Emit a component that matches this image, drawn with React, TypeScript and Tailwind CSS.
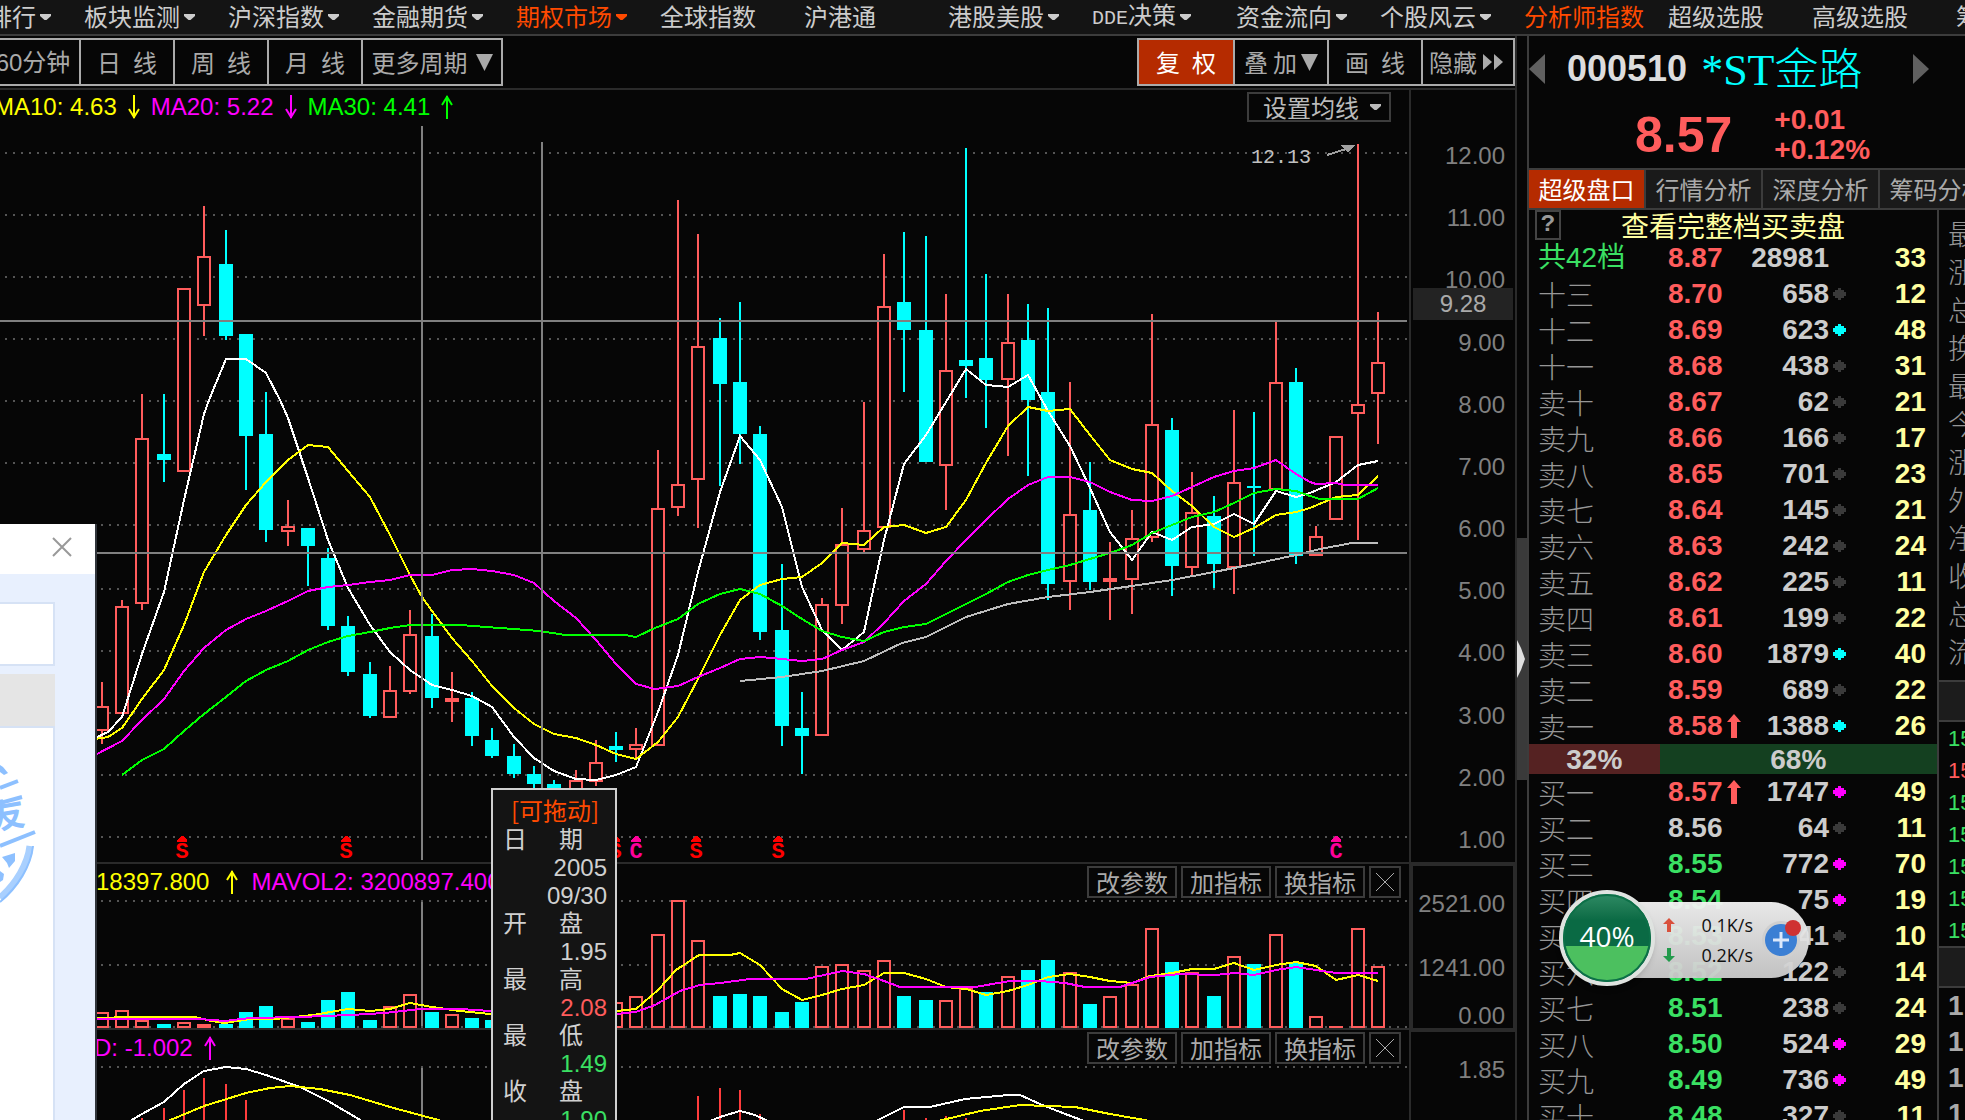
import { useState } from "react"
import type { ReactNode } from "react"

const RED = "#ff5c5c"
const CYAN = "#00ffff"

type Candle = {
  x: number
  high: number
  top: number
  bottom: number
  low: number
  up: boolean
  volume: number
  volumeUp?: boolean
}

function c(
  x: number,
  high: number,
  top: number,
  bottom: number,
  low: number,
  up: number,
  volume: number,
  volumeUp?: boolean
): Candle {
  return { x, high, top, bottom, low, up: up === 1, volume, volumeUp }
}

const candles: Candle[] = [
  c(102, 682, 706, 731, 744, 1, 1012),
  c(122, 600, 606, 714, 714, 1, 1010),
  c(142, 394, 438, 604, 610, 1, 1020),
  c(164, 394, 454, 460, 482, 0, 1024),
  c(184, 288, 288, 472, 472, 1, 1022),
  c(204, 206, 256, 306, 336, 1, 1024),
  c(226, 230, 264, 336, 340, 0, 1024),
  c(246, 334, 334, 436, 490, 0, 1012),
  c(266, 392, 434, 530, 542, 0, 1006),
  c(288, 500, 526, 532, 546, 1, 1018),
  c(308, 528, 528, 546, 586, 0, 1022),
  c(328, 548, 558, 626, 630, 0, 1000),
  c(348, 616, 626, 672, 676, 0, 992),
  c(370, 662, 674, 716, 718, 0, 1020),
  c(390, 666, 690, 718, 718, 1, 1006),
  c(410, 610, 634, 692, 694, 1, 994),
  c(432, 614, 636, 698, 708, 0, 1012),
  c(452, 672, 698, 702, 722, 1, 1014),
  c(472, 692, 698, 736, 746, 0, 1018),
  c(492, 728, 740, 756, 758, 0, 1020),
  c(514, 744, 756, 774, 778, 0, 1020),
  c(534, 766, 774, 784, 790, 0, 1020),
  c(554, 780, 784, 792, 796, 0, 1018),
  c(576, 770, 780, 796, 800, 1, 1016),
  c(596, 740, 762, 782, 786, 1, 1010),
  c(616, 732, 746, 750, 762, 0, 1002, true),
  c(636, 728, 744, 750, 758, 1, 996),
  c(658, 450, 508, 746, 746, 1, 934),
  c(678, 200, 484, 508, 516, 1, 900),
  c(698, 234, 346, 480, 528, 1, 940),
  c(720, 318, 338, 384, 486, 0, 996),
  c(740, 302, 382, 434, 464, 0, 994),
  c(760, 426, 434, 632, 640, 0, 996),
  c(782, 564, 630, 726, 746, 0, 1012),
  c(802, 692, 728, 736, 774, 0, 1002),
  c(822, 598, 604, 736, 736, 1, 966),
  c(842, 508, 544, 606, 624, 1, 964),
  c(864, 402, 530, 550, 554, 1, 970),
  c(884, 254, 306, 528, 528, 1, 960),
  c(904, 232, 302, 330, 392, 0, 996),
  c(926, 236, 330, 462, 462, 0, 1000),
  c(946, 294, 370, 466, 510, 1, 1000),
  c(966, 148, 360, 366, 398, 0, 988, true),
  c(986, 274, 358, 380, 428, 0, 992),
  c(1008, 294, 342, 380, 456, 1, 976),
  c(1028, 304, 340, 400, 476, 0, 970),
  c(1048, 308, 392, 584, 600, 0, 960),
  c(1070, 382, 514, 582, 610, 1, 972),
  c(1090, 462, 510, 582, 590, 0, 1004),
  c(1110, 542, 578, 582, 620, 1, 996),
  c(1132, 510, 538, 580, 614, 1, 984),
  c(1152, 314, 424, 538, 542, 1, 928),
  c(1172, 418, 430, 566, 596, 0, 962),
  c(1192, 472, 512, 568, 576, 1, 972),
  c(1214, 496, 516, 564, 588, 0, 996),
  c(1234, 410, 482, 568, 594, 1, 956),
  c(1254, 412, 486, 488, 556, 0, 964),
  c(1276, 320, 382, 490, 490, 1, 934),
  c(1296, 368, 382, 556, 564, 0, 962),
  c(1316, 526, 536, 556, 556, 1, 1016),
  c(1336, 436, 436, 520, 520, 1, 1026),
  c(1358, 144, 404, 414, 540, 1, 928),
  c(1378, 312, 362, 394, 444, 1, 966),
]

const priceLines = [
  {
    color: "#bdbdbd",
    points:
      "740,681 782,677 822,671 864,661 902,643 926,637 966,617 1008,604 1048,597 1090,592 1132,586 1172,580 1214,572 1254,564 1296,555 1320,549 1352,543 1378,543",
  },
  {
    color: "#ffffff",
    points:
      "95,738 108,732 122,717 142,654 164,592 184,500 204,414 209,400 226,359 246,359 266,373 280,400 288,418 308,478 328,540 348,588 370,625 390,652 410,670 432,685 452,690 472,696 492,707 514,737 534,758 554,771 576,779 596,780 616,775 636,767 658,712 678,655 698,572 720,492 740,436 760,460 782,507 802,587 822,630 842,650 864,632 884,540 904,464 926,435 946,402 966,369 986,385 1008,387 1028,375 1048,411 1070,446 1090,488 1110,532 1132,560 1152,532 1172,540 1192,527 1214,524 1234,514 1254,524 1276,491 1296,497 1310,493 1336,482 1358,465 1378,461",
  },
  {
    color: "#ffff00",
    points:
      "95,739 108,737 122,728 142,699 164,670 184,625 204,572 226,535 246,505 266,482 288,460 308,445 328,447 348,471 370,497 390,535 410,575 422,597 432,611 452,638 472,661 492,686 514,708 534,724 554,734 576,738 596,745 616,754 636,759 658,742 678,717 698,679 720,635 740,600 760,585 782,579 802,577 822,563 842,543 864,545 884,527 904,525 926,533 946,527 966,500 986,463 1008,426 1028,407 1048,411 1070,409 1090,435 1110,460 1132,469 1152,473 1172,491 1192,506 1214,527 1234,537 1254,528 1276,515 1296,512 1310,508 1336,497 1358,495 1378,476",
  },
  {
    color: "#ff00ff",
    points:
      "95,755 122,741 142,720 164,699 184,671 204,648 226,630 246,619 266,611 288,601 308,591 328,587 348,585 370,582 390,580 410,575 432,575 452,570 472,569 492,571 514,575 534,583 554,601 576,618 596,640 616,664 636,684 655,689 678,686 698,677 720,668 740,659 760,657 782,659 802,661 822,659 842,650 864,642 884,623 904,601 926,584 946,561 966,540 986,520 1008,499 1028,485 1048,477 1070,477 1090,482 1110,492 1132,500 1152,501 1172,496 1192,487 1214,477 1234,471 1254,468 1276,460 1296,474 1310,482 1316,484 1336,483 1345,485 1378,485",
  },
  {
    color: "#00ff00",
    points:
      "122,775 142,760 164,749 184,731 204,714 226,697 246,681 266,670 288,661 308,650 328,642 348,636 370,632 390,628 410,625 460,625 500,628 540,631 565,635 625,635 636,637 655,628 678,619 698,604 720,594 740,589 760,594 782,606 802,619 822,631 842,637 864,641 884,632 904,627 926,624 946,614 966,604 986,594 1008,582 1028,575 1048,570 1070,565 1090,559 1110,553 1132,545 1152,533 1172,525 1192,517 1214,512 1234,503 1254,493 1276,489 1296,491 1310,496 1320,499 1358,499 1378,488",
  },
]

const volumeLines = [
  {
    color: "#ffff00",
    points:
      "95,1018 133,1017 195,1017 211,1021 225,1023 250,1019 275,1019 313,1015 348,1009 370,1011 390,1009 410,1003 432,1007 460,1011 490,1014 616,1011 636,1009 658,990 676,970 699,955 730,955 740,953 760,965 782,989 802,1000 822,995 842,989 864,985 884,973 904,973 926,979 946,987 966,989 986,995 1008,991 1028,985 1048,977 1070,974 1090,977 1110,981 1132,983 1150,976 1172,973 1192,969 1214,969 1234,963 1254,970 1276,965 1296,962 1316,966 1336,980 1358,975 1378,981",
  },
  {
    color: "#ff00ff",
    points:
      "95,1019 200,1019 225,1021 250,1018 300,1017 350,1015 385,1013 420,1009 460,1009 490,1011 616,1014 636,1012 655,1005 680,991 700,985 720,983 750,979 806,979 842,971 864,974 884,981 900,987 975,987 1010,981 1040,981 1065,983 1085,987 1120,987 1150,977 1180,974 1215,975 1235,973 1254,975 1276,970 1296,967 1316,970 1336,973 1378,973",
  },
]

const macdLines = [
  { color: "#ffffff", points: "130,1121 142,1114 164,1102 184,1084 204,1071 226,1067 246,1069 266,1075 300,1087 328,1101 362,1121" },
  { color: "#ffff00", points: "168,1121 204,1106 246,1093 270,1088 290,1086 320,1089 350,1095 390,1107 442,1121" },
  { color: "#ffffff", points: "710,1121 720,1117 740,1111 755,1115 768,1121" },
  { color: "#ffffff", points: "876,1121 904,1107 930,1107 965,1099 1008,1095 1020,1095 1040,1104 1060,1112 1084,1121" },
  { color: "#ffff00", points: "938,1121 980,1111 1020,1105 1075,1107 1110,1114 1150,1121" },
]

const macdBars = [
  [142, 1118],
  [164, 1108],
  [184, 1090],
  [204, 1078],
  [226, 1084],
  [246, 1100],
  [698, 1096],
  [720, 1088],
  [740, 1090],
  [760, 1114],
  [904, 1110],
  [926, 1118],
  [946, 1116],
  [966, 1118],
]

const markers = [
  { x: 182, letter: "S", color: "#ff0000" },
  { x: 346, letter: "S", color: "#ff0000" },
  { x: 615, letter: "S", color: "#ff0000" },
  { x: 636, letter: "C", color: "#ff0099" },
  { x: 696, letter: "S", color: "#ff0000" },
  { x: 778, letter: "S", color: "#ff0000" },
  { x: 1336, letter: "C", color: "#ff0099" },
]

const navItems: { label: ReactNode; arrow?: boolean; hot?: boolean }[] = [
  { label: "综合排行", arrow: true },
  { label: "板块监测", arrow: true },
  { label: "沪深指数", arrow: true },
  { label: "金融期货", arrow: true },
  { label: "期权市场", arrow: true, hot: true },
  { label: "全球指数" },
  { label: "沪港通" },
  { label: "港股美股", arrow: true },
  { label: <><span className="font-['Liberation_Mono',monospace] text-[20px]">DDE</span>决策</>, arrow: true },
  { label: "资金流向", arrow: true },
  { label: "个股风云", arrow: true },
  { label: "分析师指数", hot: true },
  { label: "超级选股" },
  { label: "高级选股" },
  { label: "筹码选股" },
]

type Level = {
  name: string
  price: string
  volume: string
  count: string
  dot?: string
  tone?: string
  arrow?: boolean
}

const asks: Level[] = [
  { name: "十三", price: "8.70", volume: "658", count: "12" },
  { name: "十二", price: "8.69", volume: "623", count: "48", dot: CYAN },
  { name: "十一", price: "8.68", volume: "438", count: "31" },
  { name: "卖十", price: "8.67", volume: "62", count: "21" },
  { name: "卖九", price: "8.66", volume: "166", count: "17" },
  { name: "卖八", price: "8.65", volume: "701", count: "23" },
  { name: "卖七", price: "8.64", volume: "145", count: "21" },
  { name: "卖六", price: "8.63", volume: "242", count: "24" },
  { name: "卖五", price: "8.62", volume: "225", count: "11" },
  { name: "卖四", price: "8.61", volume: "199", count: "22" },
  { name: "卖三", price: "8.60", volume: "1879", count: "40", dot: CYAN },
  { name: "卖二", price: "8.59", volume: "689", count: "22" },
  { name: "卖一", price: "8.58", volume: "1388", count: "26", dot: CYAN, arrow: true },
]

const GREEN_TEXT = "text-[#3ae063]"
const RED_TEXT = "text-[#ff5c5c]"
const GREY_TEXT = "text-[#cccccc]"

const bids: Level[] = [
  { name: "买一", price: "8.57", volume: "1747", count: "49", dot: "#ff00ff", arrow: true },
  { name: "买二", price: "8.56", volume: "64", count: "11", tone: GREY_TEXT },
  { name: "买三", price: "8.55", volume: "772", count: "70", dot: "#ff00ff", tone: GREEN_TEXT },
  { name: "买四", price: "8.54", volume: "75", count: "19", dot: "#ff00ff", tone: GREEN_TEXT },
  { name: "买五", price: "8.53", volume: "41", count: "10", tone: GREEN_TEXT },
  { name: "买六", price: "8.52", volume: "122", count: "14", tone: GREEN_TEXT },
  { name: "买七", price: "8.51", volume: "238", count: "24", tone: GREEN_TEXT },
  { name: "买八", price: "8.50", volume: "524", count: "29", dot: "#ff00ff", tone: GREEN_TEXT },
  { name: "买九", price: "8.49", volume: "736", count: "49", dot: "#ff00ff", tone: GREEN_TEXT },
  { name: "买十", price: "8.48", volume: "327", count: "11", tone: GREEN_TEXT },
]

const tipRows = [
  { label: "日期", values: ["2005", "09/30"], tone: "text-[#d0d0d0]" },
  { label: "开盘", values: ["1.95"], tone: "text-[#d0d0d0]" },
  { label: "最高", values: ["2.08"], tone: RED_TEXT },
  { label: "最低", values: ["1.49"], tone: GREEN_TEXT },
  { label: "收盘", values: ["1.90"], tone: GREEN_TEXT },
]

const priceTicks = ["12.00", "11.00", "10.00", "9.00", "8.00", "7.00", "6.00", "5.00", "4.00", "3.00", "2.00", "1.00"]
const gridY = [153, 215, 277, 339, 401, 463, 525, 589, 651, 713, 775, 837]

function Caret() {
  return (
    <svg width="11" height="6" viewBox="0 0 11 6" fill="currentColor" className="shrink-0">
      <path d="M0 0H11V2L6.5 6H4.5L0 2Z" />
    </svg>
  )
}

function TrendArrow({ down }: { down?: boolean }) {
  return (
    <svg
      width="14"
      height="24"
      viewBox="0 0 14 24"
      fill="none"
      stroke="currentColor"
      strokeWidth="2"
      className={down ? "rotate-180" : ""}
    >
      <path d="M7 24V1M2 10L7 2L12 10" />
    </svg>
  )
}

function GridLines({ ys }: { ys: number[] }) {
  return (
    <g stroke="#555555" strokeWidth="2" strokeDasharray="2 6">
      {ys.map((y) => (
        <line key={y} x1="5" x2="1409" y1={y} y2={y} />
      ))}
    </g>
  )
}

function Lines({ lines }: { lines: { color: string; points: string }[] }) {
  return (
    <g fill="none" strokeWidth="2">
      {lines.map((line) => (
        <polyline key={line.points} points={line.points} stroke={line.color} />
      ))}
    </g>
  )
}

function Bar({ x, top, bottom, up }: { x: number; top: number; bottom: number; up: boolean }) {
  if (up && bottom - top > 4) {
    return (
      <rect
        x={x - 6}
        y={top + 1}
        width={12}
        height={bottom - top - 2}
        fill="#060606"
        stroke={RED}
        strokeWidth="2"
      />
    )
  }

  return (
    <rect x={x - 7} y={top} width={14} height={bottom - top} fill={up ? RED : CYAN} />
  )
}

function PriceChart() {
  return (
    <svg
      viewBox="0 124 1409 738"
      preserveAspectRatio="none"
      shapeRendering="crispEdges"
      className="block h-[738px] w-full"
    >
      <GridLines ys={gridY} />

      {candles.map((item) => (
        <g key={item.x}>
          <line
            x1={item.x}
            x2={item.x}
            y1={item.high}
            y2={item.low}
            stroke={item.up ? RED : CYAN}
            strokeWidth="2"
          />
          <Bar x={item.x} top={item.top} bottom={item.bottom} up={item.up} />
        </g>
      ))}

      <Lines lines={priceLines} />

      <g stroke="#808080" strokeWidth="2">
        <line x1="0" x2="1407" y1="321" y2="321" />
        <line x1="0" x2="1407" y1="553" y2="553" />
        <line x1="422" x2="422" y1="126" y2="860" />
        <line x1="542" x2="542" y1="142" y2="860" />
      </g>

      {markers.map((marker) => (
        <g key={marker.x} fill={marker.color}>
          <path d={`M${marker.x - 5} 842h10v-2l-4 -4h-2l-4 4z`} />
          <text
            x={marker.x}
            y="858"
            textAnchor="middle"
            className="font-['Liberation_Mono',monospace] text-[22px] font-bold"
          >
            {marker.letter}
          </text>
        </g>
      ))}

      <text x="1251" y="163" fill="#c0c0c0" className="font-['Liberation_Mono',monospace] text-[20px]">
        12.13
      </text>
      <path d="M1327 155L1346 149" stroke="#a0a0a0" strokeWidth="2" />
      <path d="M1340 145H1355L1348 152Z" fill="#a0a0a0" />
    </svg>
  )
}

function VolumeChart() {
  return (
    <svg
      viewBox="0 900 1409 128"
      preserveAspectRatio="none"
      shapeRendering="crispEdges"
      className="block h-[128px] w-full"
    >
      <GridLines ys={[901, 965, 1027]} />
      {candles.map((item) => (
        <Bar
          key={item.x}
          x={item.x}
          top={item.volume}
          bottom={1028}
          up={item.volumeUp ?? item.up}
        />
      ))}
      <line x1="422" x2="422" y1="902" y2="1026" stroke="#808080" strokeWidth="2" />
      <Lines lines={volumeLines} />
    </svg>
  )
}

function MacdChart() {
  return (
    <svg
      viewBox="0 1066 1409 54"
      preserveAspectRatio="none"
      shapeRendering="crispEdges"
      className="block h-[54px] w-full"
    >
      <GridLines ys={[1067]} />
      {macdBars.map(([x, y]) => (
        <line key={x} x1={x} x2={x} y1={y} y2="1120" stroke="#ff3c3c" strokeWidth="2" />
      ))}
      <line x1="422" x2="422" y1="1068" y2="1120" stroke="#808080" strokeWidth="2" />
      <Lines lines={macdLines} />
    </svg>
  )
}

function PanelButtons() {
  return (
    <div className="ml-auto flex gap-1 pr-2">
      {["改参数", "加指标", "换指标"].map((label) => (
        <button
          key={label}
          className="h-8 w-[90px] border-2 border-[#3c3c3c] text-center text-[24px] leading-[26px] text-[#aaaaaa]"
        >
          {label}
        </button>
      ))}
      <button
        aria-label="关闭"
        className="flex h-8 w-8 items-center justify-center border-2 border-[#3c3c3c]"
      >
        <svg width="20" height="20" viewBox="0 0 20 20" stroke="#aaaaaa" strokeWidth="1">
          <path d="M1 1L19 19M19 1L1 19" />
        </svg>
      </button>
    </div>
  )
}

function LevelTable({ levels, children }: { levels: Level[]; children?: ReactNode }) {
  return (
    <table className="w-full table-fixed border-collapse font-['Liberation_Sans','Noto_Sans_CJK_SC',sans-serif] text-[28px] leading-9">
      <colgroup>
        <col className="w-[139px]" />
        <col className="w-[75px]" />
        <col className="w-[103px]" />
        <col />
      </colgroup>
      <tbody>
        {children}
        {levels.map((level) => (
          <tr key={level.name} className="h-9">
            <th scope="row" className="p-0 pl-[9px] text-left font-['Noto_Sans_CJK_SC',sans-serif] font-light text-[#969696]">
              {level.name}
            </th>
            <td className={`p-0 font-bold ${level.tone ?? RED_TEXT}`}>
              <span className="flex items-center gap-1">
                {level.price}
                {level.arrow && (
                  <svg width="14" height="24" viewBox="0 0 14 24" fill="currentColor" className="shrink-0">
                    <path d="M7 0L14 8H10V24H4V8H0Z" />
                  </svg>
                )}
              </span>
            </td>
            <td className="p-0 font-bold text-[#cccccc]">
              <span className="flex items-center justify-end gap-1">
                {level.volume}
                <svg width="13" height="12" viewBox="0 0 13 12" fill={level.dot ?? "#3a3a3a"}>
                  <path d="M5 0H8V2H11V4H13V8H11V10H8V12H5V10H2V8H0V4H2V2H5Z" />
                </svg>
              </span>
            </td>
            <td className="p-0 pr-[11px] text-right font-bold text-[#ffffa0]">{level.count}</td>
          </tr>
        ))}
      </tbody>
    </table>
  )
}

function QuotePanel() {
  const [tab, setTab] = useState("超级盘口")

  return (
    <aside className="flex w-[438px] shrink-0 flex-col overflow-hidden border-l-2 border-[#3c3c3c]">

      <header className="h-[134px] shrink-0 border-b-2 border-[#3c3c3c]">
        <div className="flex h-[66px] items-center font-['Liberation_Sans',sans-serif]">
          <button aria-label="上一只">
            <svg width="16" height="30" viewBox="0 0 16 30" fill="#606060">
              <path d="M16 0V30L0 15Z" />
            </svg>
          </button>
          <h1 className="flex flex-1 items-center pl-[22px] text-[36px] font-bold text-[#dddddd]">
            000510
            <span className="pt-1 pl-[14px] font-['Liberation_Serif','Noto_Sans_CJK_SC',serif] text-[44px] leading-[60px] font-light text-[#00ffff]">
              *ST金路
            </span>
          </h1>
          <button aria-label="下一只" className="pr-9">
            <svg width="16" height="30" viewBox="0 0 16 30" fill="#606060">
              <path d="M0 0V30L16 15Z" />
            </svg>
          </button>
        </div>
        <div className="flex h-[66px] items-center gap-[42px] pl-[106px] font-['Liberation_Sans',sans-serif] font-bold text-[#ff5c5c]">
          <p className="text-[50px] leading-[60px]">8.57</p>
          <p className="text-[28px] leading-[30px]">
            +0.01
            <br />
            +0.12%
          </p>
        </div>
      </header>

      <div className="flex h-10 shrink-0 border-b-2 border-[#3c3c3c]">
        {["超级盘口", "行情分析", "深度分析", "筹码分析"].map((label) => (
          <button
            key={label}
            onClick={() => setTab(label)}
            className={`w-[117px] shrink-0 border-r-2 border-[#3c3c3c] text-center text-[24px] leading-9 ${
              tab === label ? "bg-[#b52b00] text-white" : "bg-[#1a1a1a] text-[#aaaaaa]"
            }`}
          >
            {label}
          </button>
        ))}
      </div>

      <div className="flex min-h-0 flex-1">
        <div className="min-w-0 flex-1">
          <div className="flex h-[30px] items-center pl-[6px]">
            <button className="h-[30px] w-[26px] border-2 border-[#444444] font-['Liberation_Mono',monospace] text-[24px] leading-6 font-bold text-[#999999]">
              ?
            </button>
            <a href="#book" className="pl-[60px] text-[28px] leading-7 text-[#ffffa0]">
              查看完整档买卖盘
            </a>
          </div>
          <LevelTable levels={asks}>
            <tr className="h-9">
              <th scope="row" className="p-0 pl-[9px] text-left font-normal text-[#3ae063]">共42档</th>
              <td className="p-0 font-bold text-[#ff5c5c]">8.87</td>
              <td className="p-0 pr-[17px] text-right font-bold text-[#cccccc]">28981</td>
              <td className="p-0 pr-[11px] text-right font-bold text-[#ffffa0]">33</td>
            </tr>
          </LevelTable>
          <div className="flex h-[30px] text-center font-['Liberation_Sans',sans-serif] text-[28px] leading-8 font-bold text-[#cccccc]">
            <span className="w-[32%] bg-[#552222]">32%</span>
            <span className="w-[68%] bg-[#144020]">68%</span>
          </div>
          <LevelTable levels={bids} />
        </div>

        <div className="w-7 shrink-0 overflow-hidden border-l-2 border-[#3c3c3c]">
          <ul className="h-[470px] w-20 pt-1 pl-[9px] text-[28px] leading-[38px] font-light text-[#969696]">
            {["最新", "涨跌", "总手", "换手", "最高", "今开", "涨停", "外盘", "净资", "收益", "总股", "流通"].map((label, i) => (
              <li key={i}>{label}</li>
            ))}
          </ul>
          <div className="h-[42px] border-y-2 border-[#3c3c3c] bg-[#1c1c1c]" />
          <ul className="h-56 w-20 pt-[1px] pl-[9px] font-['Liberation_Sans',sans-serif] text-[22px] leading-8 text-[#3ae063]">
            {[0, 1, 2, 3, 4, 5, 6].map((i) => (
              <li key={i} className={i === 1 ? "text-[#ff5c5c]" : ""}>15:00</li>
            ))}
          </ul>
          <div className="h-[42px] border-y-2 border-[#3c3c3c] bg-[#1c1c1c]" />
          <ul className="w-20 pl-[9px] font-['Liberation_Sans',sans-serif] text-[28px] leading-9 font-bold text-[#aaaaaa]">
            {[0, 1, 2, 3].map((i) => (
              <li key={i}>1</li>
            ))}
          </ul>
        </div>
      </div>

    </aside>
  )
}

function DataTip() {
  return (
    <div className="absolute top-[788px] left-[491px] w-[126px] border-2 border-[#d0d0d0] bg-[#141414] pt-1 pr-2 pb-3 pl-[10px] text-[24px] leading-7">
      <p className="text-center leading-8 text-[#ff4a00]">[可拖动]</p>
      {tipRows.map((row) => (
        <div key={row.label}>
          <p className="flex justify-between pr-6 leading-6 text-[#d0d0d0]">
            <span>{row.label[0]}</span>
            <span>{row.label[1]}</span>
          </p>
          <div className={`pt-1 text-right font-['Liberation_Sans',sans-serif] ${row.tone}`}>
            {row.values.map((value) => (
              <p key={value}>{value}</p>
            ))}
          </div>
        </div>
      ))}
    </div>
  )
}

function SideDialog() {
  return (
    <section className="absolute top-[524px] bottom-0 left-0 flex w-[97px] flex-col overflow-hidden border-r-2 border-[#30343a] bg-[#e8f0fe]">
      <div className="flex h-[50px] shrink-0 items-start justify-end bg-white pt-3 pr-[22px]">
        <button aria-label="关闭窗口">
          <svg width="22" height="22" viewBox="0 0 22 22" stroke="#999999" strokeWidth="2">
            <path d="M2 2L20 20M20 2L2 20" />
          </svg>
        </button>
      </div>
      <div className="mt-7 mr-10 h-16 shrink-0 border-2 border-l-0 border-[#d6e2f5] bg-white" />
      <div className="mt-2 mr-10 h-[52px] shrink-0 bg-[#e5e5e5]" />
      <div className="mr-10 flex-1 border-t-2 border-r-2 border-[#d6e2f5] bg-white">
        <svg width="53" height="180" viewBox="0 728 53 180" fill="none" stroke="#8dc0ff">
          <path d="M0 765L3 767L8 773L4 775L0 772Z" fill="#8dc0ff" stroke="none" />
          <path d="M0 788L18 781" strokeWidth="4" />
          <path d="M0 803L22 797" strokeWidth="4" />
          <path d="M0 846L35 832" strokeWidth="4" />
          <path d="M30 846C28 864 16 884 0 898" strokeWidth="7" stroke="#a9d0ff" />
          <path d="M33 846C31 866 18 887 0 902" strokeWidth="2" />
          <path d="M2 857L15 853L15 861L9 868L7 863Z" fill="#8dc0ff" stroke="none" />
          <path d="M0 871L4 874L3 880L0 882Z" fill="#8dc0ff" stroke="none" />
          <text
            x="-8"
            y="829"
            transform="rotate(-10 0 824)"
            fill="#8dc0ff"
            stroke="none"
            className="font-['Noto_Sans_CJK_SC',sans-serif] text-[34px] font-bold"
          >
            友
          </text>
        </svg>
      </div>
    </section>
  )
}

function SpeedBall() {
  return (
    <div className="absolute top-[890px] left-[1559px] flex items-center font-['Open_Sans',sans-serif]">
      <div className="z-10 flex h-24 w-24 items-center justify-center rounded-full border-4 border-[#dfe3e0] bg-linear-to-b from-[#2d8b64] from-0% via-[#0a6a44] via-30% to-[#0a6a44] text-[28px] text-white shadow-md">
        <div className="flex h-full w-full items-center justify-center rounded-full border-2 border-[#0c7048] bg-linear-to-b from-transparent from-60% to-[#4cc05f] to-60% pb-1">
          40%
        </div>
      </div>
      <div className="mt-1 -ml-9 flex h-[76px] w-[190px] items-center rounded-r-full bg-linear-to-b from-[#f4f4f4]/95 to-[#cccccc]/95 pl-11">
        <dl className="w-[90px] text-[18px] leading-[30px] text-[#111111]">
          <div className="flex items-center justify-between">
            <dt>
              <svg width="12" height="14" viewBox="0 0 12 14" fill="#d9503c">
                <path d="M6 0L12 6H8V14H4V6H0Z" />
              </svg>
            </dt>
            <dd>0.1K/s</dd>
          </div>
          <div className="flex items-center justify-between">
            <dt>
              <svg width="12" height="14" viewBox="0 0 12 14" fill="#229a4c">
                <path d="M6 14L12 8H8V0H4V8H0Z" />
              </svg>
            </dt>
            <dd>0.2K/s</dd>
          </div>
        </dl>
        <button aria-label="加速" className="ml-2">
          <svg width="42" height="42" viewBox="0 0 42 42">
            <circle cx="20" cy="21" r="19" fill="#cfcfcf" />
            <circle cx="20" cy="21" r="16" fill="#3b7fd4" />
            <path d="M20 13V29M12 21H28" stroke="#dce8fa" strokeWidth="3" />
            <circle cx="32" cy="9" r="8" fill="#cf3232" />
          </svg>
        </button>
      </div>
    </div>
  )
}

export default function App() {
  return (
    <main className="relative flex h-screen flex-col overflow-hidden bg-[#060606] font-['Noto_Sans_CJK_SC',sans-serif]">

      <nav className="flex h-9 shrink-0 overflow-hidden border-b-2 border-[#3c3c3c] bg-[#141414]">
        <div className="-ml-[60px] flex">
          {navItems.map((item, i) => (
            <a
              key={i}
              href="#nav"
              className={`flex w-36 shrink-0 items-center gap-1 text-[24px] leading-8 whitespace-nowrap ${
                item.hot ? "text-[#ff4a00]" : "text-[#cccccc]"
              }`}
            >
              <span className="pb-[2px]">{item.label}</span>
              {item.arrow && <Caret />}
            </a>
          ))}
        </div>
      </nav>

      <div className="flex min-h-0 flex-1">

        <div className="flex min-w-0 flex-1 flex-col border-r-2 border-[#2a2a2a]">

          <div className="flex h-[54px] shrink-0 justify-between border-b-2 border-[#2a2a2a] pt-[2px] text-[24px] text-[#aaaaaa]">
            <div className="-ml-[15px] flex h-12 divide-x-2 divide-[#aaaaaa] border-2 border-[#aaaaaa]">
              <button className="w-[94px] whitespace-nowrap">
                <span className="font-['Liberation_Sans',sans-serif]">60</span>分钟
              </button>
              <button className="w-[94px]">日&ensp;线</button>
              <button className="w-[94px]">周&ensp;线</button>
              <button className="w-[94px]">月&ensp;线</button>
              <button className="flex w-[138px] items-center justify-center gap-2">
                更多周期
                <svg width="17" height="17" viewBox="0 0 17 17" fill="currentColor">
                  <path d="M0 0H17L8.5 17Z" />
                </svg>
              </button>
            </div>
            <div className="flex h-12 divide-x-2 divide-[#aaaaaa] border-2 border-[#aaaaaa]">
              <button className="w-24 bg-[#b52b00] text-white">复&ensp;权</button>
              <button className="flex w-[94px] items-center justify-center gap-1">
                叠&thinsp;加
                <svg width="17" height="17" viewBox="0 0 17 17" fill="currentColor">
                  <path d="M0 0H17L8.5 17Z" />
                </svg>
              </button>
              <button className="w-[94px]">画&ensp;线</button>
              <button className="flex w-[90px] items-center justify-center gap-[6px] pr-1">
                隐藏
                <svg width="20" height="16" viewBox="0 0 20 16" fill="currentColor">
                  <path d="M0 0L9 8L0 16ZM11 0L20 8L11 16Z" />
                </svg>
              </button>
            </div>
          </div>

          <div className="flex h-[774px] shrink-0 border-b-2 border-[#2a2a2a]">
            <div className="min-w-0 flex-1">
              <div className="flex h-[34px] items-center font-['Liberation_Sans',sans-serif] text-[24px]">
                <div className="-ml-[6px] flex items-center gap-[10px]">
                  <span className="text-[#ffff00]">MA10: 4.63</span>
                  <span className="text-[#ffff00]"><TrendArrow down /></span>
                  <span className="text-[#ff00ff]">MA20: 5.22</span>
                  <span className="text-[#ff00ff]"><TrendArrow down /></span>
                  <span className="text-[#00ff00]">MA30: 4.41</span>
                  <span className="text-[#00ff00]"><TrendArrow /></span>
                </div>
                <button className="mr-[18px] ml-auto flex h-[30px] w-36 items-center justify-between border-2 border-[#3c3c3c] pr-2 pl-[14px] font-['Noto_Sans_CJK_SC',sans-serif] leading-6 text-[#bbbbbb]">
                  设置均线
                  <Caret />
                </button>
              </div>
              <PriceChart />
            </div>
            <div className="relative flex w-[106px] flex-col justify-between border-l-2 border-[#2a2a2a] pt-[52px] pr-[10px] pb-2 text-right font-['Liberation_Sans',sans-serif] text-[24px] leading-7 text-[#808080]">
              {priceTicks.map((tick) => (
                <span key={tick}>{tick}</span>
              ))}
              <span className="absolute top-[198px] right-[2px] left-[2px] bg-[#232323] text-center leading-8 text-[#aaaaaa]">
                9.28
              </span>
            </div>
          </div>

          <div className="flex h-[166px] shrink-0 border-b-2 border-[#2a2a2a]">
            <div className="min-w-0 flex-1">
              <div className="flex h-9 items-center pl-24">
                <div className="flex items-center gap-4 font-['Liberation_Sans',sans-serif] text-[24px] whitespace-nowrap">
                  <span className="text-[#ffff00]">18397.800</span>
                  <span className="text-[#ffff00]"><TrendArrow /></span>
                  <span className="-ml-1 text-[#ff00ff]">MAVOL2: 3200897.400</span>
                </div>
                <PanelButtons />
              </div>
              <VolumeChart />
            </div>
            <div className="flex w-[106px] flex-col border-l-2 border-[#2a2a2a] text-right font-['Liberation_Sans',sans-serif] text-[24px] leading-7 text-[#808080]">
              <div className="flex flex-1 flex-col border-2 border-[#2a2a2a] pt-6 pr-2">
                <span>2521.00</span>
                <span className="pt-9">1241.00</span>
                <span className="pt-5">0.00</span>
              </div>
            </div>
          </div>

          <div className="flex min-h-0 flex-1 overflow-hidden">
            <div className="min-w-0 flex-1">
              <div className="flex h-9 items-center pl-[94px]">
                <div className="flex items-center gap-[10px] font-['Liberation_Sans',sans-serif] text-[24px] text-[#ff00ff]">
                  D: -1.002
                  <TrendArrow />
                </div>
                <PanelButtons />
              </div>
              <MacdChart />
            </div>
            <div className="w-[106px] border-l-2 border-[#2a2a2a] pt-[26px] pr-[10px] text-right font-['Liberation_Sans',sans-serif] text-[24px] leading-7 text-[#808080]">
              1.85
            </div>
          </div>

        </div>

        <div className="w-[10px] shrink-0 pt-[502px]">
          <button
            aria-label="收起侧栏"
            className="flex h-[242px] w-full items-center bg-[#3a3a3a]"
          >
            <svg width="8" height="38" viewBox="0 0 8 38" fill="#e0e0e0">
              <path d="M0 0L4 8L8 19L4 30L0 38Z" />
            </svg>
          </button>
        </div>

        <QuotePanel />

      </div>

      <DataTip />
      <SideDialog />
      <SpeedBall />

    </main>
  )
}
